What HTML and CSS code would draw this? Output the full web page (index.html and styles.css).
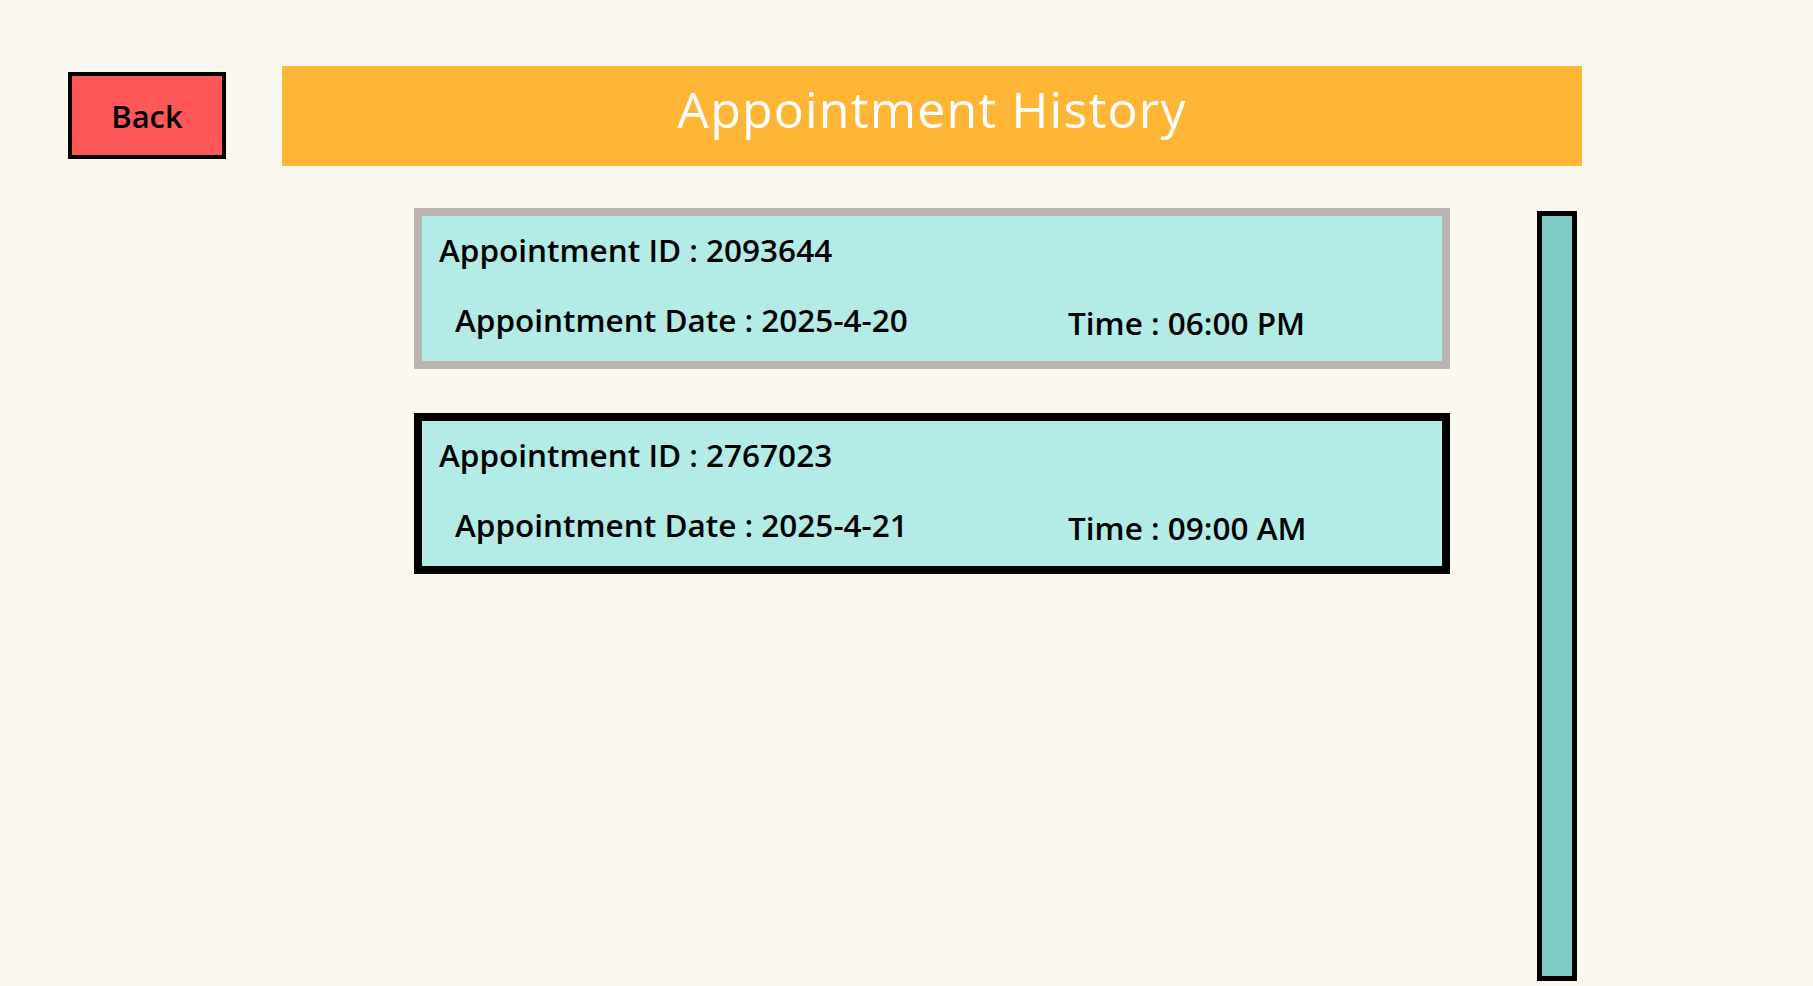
FILE: index.html
```html
<!DOCTYPE html>
<html>
<head>
<meta charset="utf-8">
<link rel="stylesheet" href="styles.css">
</head>
<body>
<div class="page">
  <div class="top">
    <button class="back">Back</button>
    <div class="header">Appointment History</div>
  </div>
  <div class="main">
    <div class="list">
      <div class="card card-grey">
        <div class="id">Appointment ID : 2093644</div>
        <div class="row">
          <div class="date">Appointment Date : 2025-4-20</div>
          <div class="time">Time : 06:00 PM</div>
        </div>
      </div>
      <div class="card card-black">
        <div class="id">Appointment ID : 2767023</div>
        <div class="row">
          <div class="date">Appointment Date : 2025-4-21</div>
          <div class="time">Time : 09:00 AM</div>
        </div>
      </div>
    </div>
    <div class="scrollbar"></div>
  </div>
</div>
</body>
</html>
```

FILE: styles.css
```css
html, body {
  margin: 0;
  padding: 0;
  background: #fbf8f0;
  font-family: "Open Sans", "Noto Sans", sans-serif;
}
.page {
  width: 1813px;
  height: 986px;
  overflow: hidden;
}
.top {
  display: flex;
  align-items: flex-start;
  padding: 66px 0 0 68px;
}
.back {
  flex: none;
  margin-top: 6px;
  width: 158px;
  height: 87px;
  box-sizing: border-box;
  border: 4px solid #000;
  background: #ff5757;
  color: #000;
  font-family: "Open Sans", sans-serif;
  font-size: 31px;
  font-weight: 600;
  padding: 0;
  display: flex;
  align-items: center;
  justify-content: center;
}
.header {
  flex: none;
  margin-left: 56px;
  width: 1300px;
  height: 100px;
  box-sizing: border-box;
  padding-bottom: 14px;
  background: #ffb535;
  color: #fff;
  font-size: 50px;
  letter-spacing: 1.2px;
  line-height: 86px;
  text-align: center;
}
.main {
  display: flex;
  align-items: flex-start;
  margin-top: 42px;
}
.list {
  flex: none;
  margin-left: 414px;
  width: 1036px;
  display: flex;
  flex-direction: column;
  gap: 44px;
}
.card {
  box-sizing: border-box;
  height: 161px;
  border: 8px solid #b9b4b2;
  background: #b3ebe6;
  padding: 14px 0 0 17px;
  font-size: 31.5px;
  font-weight: 600;
  line-height: 40px;
  color: #000;
}
.card-black {
  border-color: #000;
}
.row {
  display: grid;
  grid-template-columns: 613px auto;
  margin-top: 30px;
  padding-left: 16px;
}
.time {
  padding-top: 3px;
}
.scrollbar {
  flex: none;
  margin-left: 87px;
  margin-top: 3px;
  width: 40px;
  height: 770px;
  box-sizing: border-box;
  border: 5px solid #000;
  background: #80cbc4;
}
```
